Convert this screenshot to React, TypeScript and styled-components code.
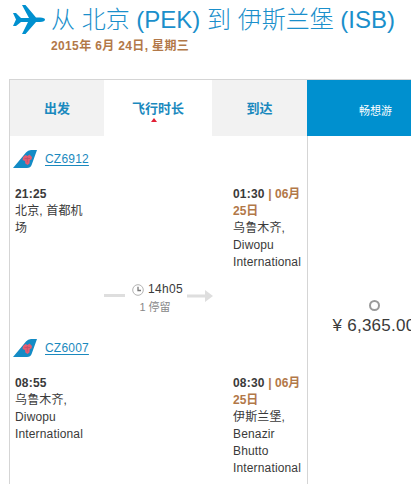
import styled, { createGlobalStyle } from 'styled-components';

const GlobalStyle = createGlobalStyle`
  * {
    box-sizing: border-box;
  }
  body {
    margin: 0;
    overflow: hidden;
    background: #fff;
    color: #3a3a3a;
    font: 12px/17px 'Liberation Sans', 'Noto Sans CJK SC', sans-serif;
  }
`;

const Page = styled.div`
  width: 411px;
  height: 484px;
  overflow: hidden;
`;

const Heading = styled.header`
  display: flex;
  height: 79px;
  padding: 4px 0 0 12px;
`;

const Plane = styled.svg`
  flex: none;
  width: 34px;
  height: 32px;
  margin-right: 5px;
`;

const Title = styled.h1`
  margin: 0;
  color: #1a8fcb;
  font-size: 24px;
  font-weight: 300;
  line-height: 31px;
  white-space: nowrap;
`;

const TravelDate = styled.p`
  margin: 3px 0 0;
  color: #b27848;
  font-weight: bold;
  letter-spacing: 0.36px;
`;

const Results = styled.div`
  display: flex;
  width: 440px;
  height: 405px;
  margin-left: 9px;
  border: solid #d5d5d5;
  border-width: 1px 0 0 1px;
`;

const Flights = styled.section`
  width: 297px;
`;

const Columns = styled.div`
  display: grid;
  grid-template-columns: 94px 108px 95px;
`;

const ColumnHead = styled.div<{ $active?: boolean }>`
  display: flex;
  flex-direction: column;
  align-items: center;
  height: 56px;
  padding-top: 20px;
  background: ${(props) => (props.$active ? '#fff' : '#f2f2f2')};
  color: #1a89be;
  font-size: 13px;
  font-weight: bold;
`;

const SortMark = styled.i`
  width: 0;
  height: 0;
  margin: 1px 8px 0 0;
  border: solid transparent;
  border-width: 0 3px 4px;
  border-bottom-color: #e21f35;
`;

const Segment = styled.article`
  height: 189px;
`;

const FlightNumber = styled.div`
  display: flex;
  align-items: center;
  height: 46px;
  padding-left: 3px;
`;

const Tail = styled.svg`
  width: 24px;
  height: 18px;
  margin-right: 8px;
`;

const FlightLink = styled.a`
  color: #1a89be;
  letter-spacing: 0.2px;
  text-decoration: underline;
  text-underline-offset: 2px;
`;

const Stop = styled.div`
  padding: 4px 13px 0 5px;
`;

const ArrivalStop = styled(Stop)`
  grid-column: 3;
  padding-right: 0;
  padding-left: 21px;
`;

const Time = styled.strong`
  display: block;
  letter-spacing: 0.2px;
`;

const NextDay = styled.span`
  color: #b27848;
  letter-spacing: 0;
`;

const Place = styled.div`
  letter-spacing: 0.15px;
`;

const Duration = styled.div`
  display: flex;
  justify-content: space-between;
  height: 34px;
  margin: 99px -1px 0 0;
`;

const Dash = styled.span`
  width: 21px;
  height: 3px;
  margin-top: 13px;
  background: #dedede;
`;

const Arrow = styled.svg`
  width: 26px;
  height: 12px;
  margin-top: 9px;
`;

const Elapsed = styled.div`
  margin-right: 2px;
  text-align: center;
`;

const ElapsedTime = styled.div`
  display: flex;
  align-items: center;
  gap: 4px;
  height: 17px;
  margin-left: 5px;
  letter-spacing: 0.3px;
`;

const StopCount = styled.div`
  color: #888;
  font-size: 11px;
  line-height: 18px;
`;

const Fare = styled.section`
  width: 140px;
`;

const FareHead = styled.div`
  height: 56px;
  padding: 23px 3px 0 0;
  background: #0090cf;
  color: #fff;
  font-size: 11px;
  text-align: center;
`;

const FareBody = styled.div`
  display: flex;
  flex-direction: column;
  align-items: center;
  height: 348px;
  padding: 164px 7px 0 0;
  border-left: 1px solid #d5d5d5;
`;

const Radio = styled.span`
  width: 11px;
  height: 11px;
  border: 2px solid #9a9a9a;
  border-radius: 50%;
`;

const Price = styled.div`
  margin-top: 5px;
  font-size: 17px;
  letter-spacing: 0.25px;
  line-height: 20px;
  white-space: nowrap;
`;

interface StopInfo {
  time: string;
  day?: string;
  place: string;
}

interface Flight {
  number: string;
  from: StopInfo;
  to: StopInfo;
  duration?: string;
}

const flights: Flight[] = [
  {
    number: 'CZ6912',
    from: { time: '21:25', place: '北京, 首都机场' },
    to: { time: '01:30', day: '06月 25日', place: '乌鲁木齐, Diwopu International' },
    duration: '14h05',
  },
  {
    number: 'CZ6007',
    from: { time: '08:55', place: '乌鲁木齐, Diwopu International' },
    to: { time: '08:30', day: '06月 25日', place: '伊斯兰堡, Benazir Bhutto International' },
  },
];

const AirlineTail = () => (
  <Tail viewBox="0 0 24 18">
    <path d="M0 18 L13 2.5 Q15 0 18 0 H24 L18.6 15 Q17.6 18 14 18 Z" fill="#138bc5" />
    <path
      d="M12.5 5 L14.5 6 L16.5 4.5 L19 7 L18.5 9.5 L16.8 10 L16.5 13.5 L14.5 15 L12.3 13.5 L12 11 L9.5 10 L10 7 Z"
      fill="#e65c70"
    />
    <path d="M11.5 8.5 H17 M14.3 7 V12.5" stroke="#b6506e" strokeWidth="0.8" />
  </Tail>
);

const Clock = () => (
  <svg width="12" height="12" viewBox="0 0 12 12" fill="none">
    <circle cx="6" cy="6" r="5.3" stroke="#b3b3b3" />
    <path d="M6 2.8 V6.5 H9" stroke="#777" strokeWidth="1.3" />
  </svg>
);

const FlightSegment = ({ number, from, to, duration }: Flight) => (
  <Segment>
    <FlightNumber>
      <AirlineTail />
      <FlightLink>{number}</FlightLink>
    </FlightNumber>
    <Columns>
      <Stop>
        <Time>{from.time}</Time>
        <Place>{from.place}</Place>
      </Stop>
      {duration && (
        <Duration>
          <Dash />
          <Elapsed>
            <ElapsedTime>
              <Clock />
              {duration}
            </ElapsedTime>
            <StopCount>1 停留</StopCount>
          </Elapsed>
          <Arrow viewBox="0 0 26 12">
            <path d="M0 4.5 H18 V0 L26 6 L18 12 V7.5 H0 Z" fill="#dedede" />
          </Arrow>
        </Duration>
      )}
      <ArrivalStop>
        <Time>
          {to.time} <NextDay>| {to.day}</NextDay>
        </Time>
        <Place>{to.place}</Place>
      </ArrivalStop>
    </Columns>
  </Segment>
);

export default function App() {
  return (
    <Page>
      <GlobalStyle />
      <Heading>
        <Plane viewBox="0 0 34 32">
          <path
            d="M1 9 H4 L9 14 H17 L10 1 H13.5 L24 13.5 H28 Q33 14 33 15.5 Q33 17.5 28 18 H24 L13.5 30 H10 L16 18 H9 L4 22 H1 L4 15.5 Z"
            fill="#0090cf"
          />
        </Plane>
        <div>
          <Title>从 北京 (PEK) 到 伊斯兰堡 (ISB)</Title>
          <TravelDate>2015年 6月 24日, 星期三</TravelDate>
        </div>
      </Heading>
      <Results>
        <Flights>
          <Columns>
            <ColumnHead>出发</ColumnHead>
            <ColumnHead $active>
              飞行时长
              <SortMark />
            </ColumnHead>
            <ColumnHead>到达</ColumnHead>
          </Columns>
          {flights.map((flight) => (
            <FlightSegment key={flight.number} {...flight} />
          ))}
        </Flights>
        <Fare>
          <FareHead>畅想游</FareHead>
          <FareBody>
            <Radio />
            <Price>¥ 6,365.00</Price>
          </FareBody>
        </Fare>
      </Results>
    </Page>
  );
}
